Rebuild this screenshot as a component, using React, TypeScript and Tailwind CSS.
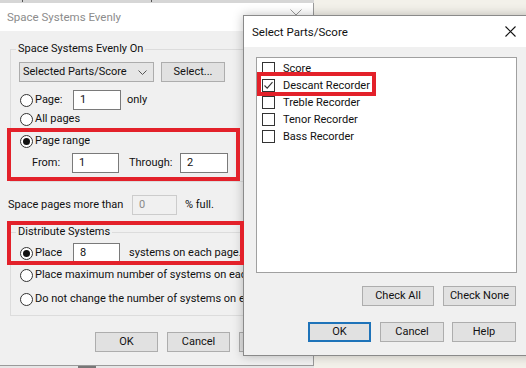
import React from "react";

const font = "font-['Segoe_UI','Roboto','Noto_Sans',sans-serif] text-[11px] leading-[16px] text-[#111]";

function Radio({ checked }: { checked?: boolean }) {
  return (
    <span className="flex h-[13px] w-[13px] shrink-0 items-center justify-center rounded-full border border-[#333] bg-white">
      {checked && <span className="h-[7px] w-[7px] rounded-full bg-[#111]" />}
    </span>
  );
}

function Box({ checked }: { checked?: boolean }) {
  return (
    <span className="flex h-[13px] w-[13px] shrink-0 items-center justify-center border border-[#333] bg-white">
      {checked && (
        <svg width="11" height="11" viewBox="0 0 11 11">
          <path d="M1.5 5.5 L4.2 8.2 L9.5 2.2" fill="none" stroke="#333" strokeWidth="1.1" />
        </svg>
      )}
    </span>
  );
}

function TextBox({ value, w, disabled }: { value: string; w: string; disabled?: boolean }) {
  return (
    <div
      className={`flex h-[20px] ${w} items-center border pl-[6px] ${
        disabled ? "border-[#cccccc] bg-[#f0f0f0] text-[#8a8a8a]" : "border-[#7a7a7a] bg-white"
      }`}
    >
      {value}
    </div>
  );
}

function Btn({ label, w, focus }: { label: string; w: string; focus?: boolean }) {
  return (
    <div
      className={`flex h-[20px] ${w} items-center justify-center bg-[#e1e1e1] ${
        focus ? "border-2 border-[#1e73b9]" : "border border-[#adadad]"
      }`}
    >
      {label}
    </div>
  );
}

function Group({ label, children, className }: { label: string; children: React.ReactNode; className: string }) {
  return (
    <div className={`border border-[#dcdcdc] ${className}`}>
      <div className="-mt-[9px] ml-[5px] w-fit bg-[#f0f0f0] px-[2px]">{label}</div>
      {children}
    </div>
  );
}

function BackDialog() {
  return (
    <div className="absolute left-0 top-[3px] h-[363px] w-[314px] border-r border-b border-[#9a9a9a] bg-[#f0f0f0]">
      <div className="flex h-[28px] items-center justify-between bg-white pl-[7px] pr-[11px] text-[#8c8c8c]">
        <span className="pb-[1px] text-[11.5px]">Space Systems Evenly</span>
        <svg width="12" height="7" viewBox="0 0 12 7" className="-mt-[10px]">
          <path d="M0.5 0.5 L6 6 L11.5 0.5" fill="none" stroke="#9a9a9a" />
        </svg>
      </div>

      <Group label="Space Systems Evenly On" className="ml-[10px] mt-[18px] w-[293px] pb-[8px]">
        <div className="mt-[5px] flex pl-[8px]">
          <div className="flex h-[20px] w-[135px] items-center justify-between border border-[#acacac] bg-[#e5e5e5] pl-[3px] pr-[6px]">
            <span>Selected Parts/Score</span>
            <svg width="9" height="5" viewBox="0 0 9 5">
              <path d="M0.5 0.5 L4.5 4.5 L8.5 0.5" fill="none" stroke="#555" />
            </svg>
          </div>
          <div className="ml-[7px]">
            <Btn label="Select..." w="w-[64px]" />
          </div>
        </div>

        <div className="mt-[8px] flex h-[20px] items-center pl-[9px]">
          <Radio />
          <span className="ml-[2px] w-[38px]">Page:</span>
          <TextBox value="1" w="w-[48px]" />
          <span className="ml-[6px]">only</span>
        </div>
        <div className="mt-[1px] flex h-[16px] items-center pl-[9px]">
          <Radio />
          <span className="ml-[2px]">All pages</span>
        </div>
        <div className="mt-[6px] flex h-[16px] items-center pl-[9px]">
          <Radio checked />
          <span className="ml-[2px]">Page range</span>
        </div>
        <div className="mt-[4px] flex h-[20px] items-center pl-[21px]">
          <span className="w-[40px]">From:</span>
          <TextBox value="1" w="w-[47px]" />
          <span className="ml-[10px] w-[51px]">Through:</span>
          <TextBox value="2" w="w-[48px]" />
        </div>
      </Group>

      <div className="mt-[13px] flex h-[20px] items-center pl-[8px]">
        <span className="w-[124px]">Space pages more than</span>
        <TextBox value="0" w="w-[45px]" disabled />
        <span className="ml-[8px]">% full.</span>
      </div>

      <Group label="Distribute Systems" className="ml-[10px] mt-[17px] w-[293px] pb-[8px]">
        <div className="mt-[3px] flex h-[20px] items-center whitespace-nowrap pl-[9px]">
          <Radio checked />
          <span className="ml-[2px] w-[38px]">Place</span>
          <TextBox value="8" w="w-[47px]" />
          <span className="ml-[9px]">systems on each page.</span>
        </div>
        <div className="mt-[4px] flex h-[16px] items-center whitespace-nowrap pl-[9px]">
          <Radio />
          <span className="ml-[2px]">Place maximum number of systems on each page.</span>
        </div>
        <div className="mt-[8px] flex h-[16px] items-center whitespace-nowrap pl-[9px]">
          <Radio />
          <span className="ml-[2px]">Do not change the number of systems on each page.</span>
        </div>
      </Group>

      <div className="mt-[16px] flex justify-end gap-[9px] pr-[11px]">
        <Btn label="OK" w="w-[63px]" />
        <Btn label="Cancel" w="w-[63px]" />
        <Btn label="Help" w="w-[63px]" />
      </div>
    </div>
  );
}

const parts = ["Score", "Descant Recorder", "Treble Recorder", "Tenor Recorder", "Bass Recorder"];

function FrontDialog() {
  return (
    <div className="absolute left-[243px] top-[15px] h-[341px] w-[292px] border border-[#8a8a8a] bg-[#f0f0f0] shadow-[0_0_10px_rgba(0,0,0,0.25)]">
      <div className="flex h-[31px] items-center justify-between bg-white pl-[8px] pr-[18px]">
        <span className="text-[11.5px]">Select Parts/Score</span>
        <svg width="11" height="11" viewBox="0 0 11 11">
          <path d="M0.5 0.5 L10.5 10.5 M10.5 0.5 L0.5 10.5" stroke="#111" strokeWidth="1.1" />
        </svg>
      </div>

      <div className="ml-[12px] mt-[10px] h-[216px] w-[261px] border border-[#a0a0a0] bg-white pt-[2px]">
        {parts.map((p, i) => (
          <div key={p} className="flex h-[17px] items-center pl-[5px]">
            <Box checked={i === 1} />
            <span className="ml-[8px]">{p}</span>
          </div>
        ))}
      </div>

      <div className="mt-[13px] flex w-[273px] justify-end gap-[9px] pr-[1px]">
        <Btn label="Check All" w="w-[72px]" />
        <Btn label="Check None" w="w-[73px]" />
      </div>

      <div className="mt-[16px] flex w-[273px] justify-end gap-[8px] pr-[1px]">
        <div className="mr-[1px]">
          <Btn label="OK" w="w-[63px]" focus />
        </div>
        <Btn label="Cancel" w="w-[64px]" />
        <Btn label="Help" w="w-[64px]" />
      </div>
    </div>
  );
}

export default function App() {
  return (
    <div className={`relative h-[368px] w-[526px] overflow-hidden bg-[#f3f1ea] ${font}`}>
      {/* strip of the window behind */}
      <div className="absolute left-0 top-0 h-[3px] w-[314px] bg-[#d6d6d6]">
        <div className="ml-[22px] h-[2px] w-[130px] border-x border-[#555]" />
      </div>
      <div className="absolute left-0 top-[366px] h-[2px] w-[314px] bg-[#e6e6e6]">
        <div className="ml-[78px] h-[2px] w-[18px] bg-[#777]" />
      </div>

      <BackDialog />
      <FrontDialog />

      {/* red annotation boxes */}
      <div className="absolute left-[7px] top-[128px] h-[53px] w-[233px] border-4 border-[#e3212a]" />
      <div className="absolute left-[7px] top-[221px] h-[44px] w-[237px] border-4 border-[#e3212a]" />
      <div className="absolute left-[257px] top-[72px] h-[24px] w-[119px] border-4 border-[#e3212a]" />
    </div>
  );
}
